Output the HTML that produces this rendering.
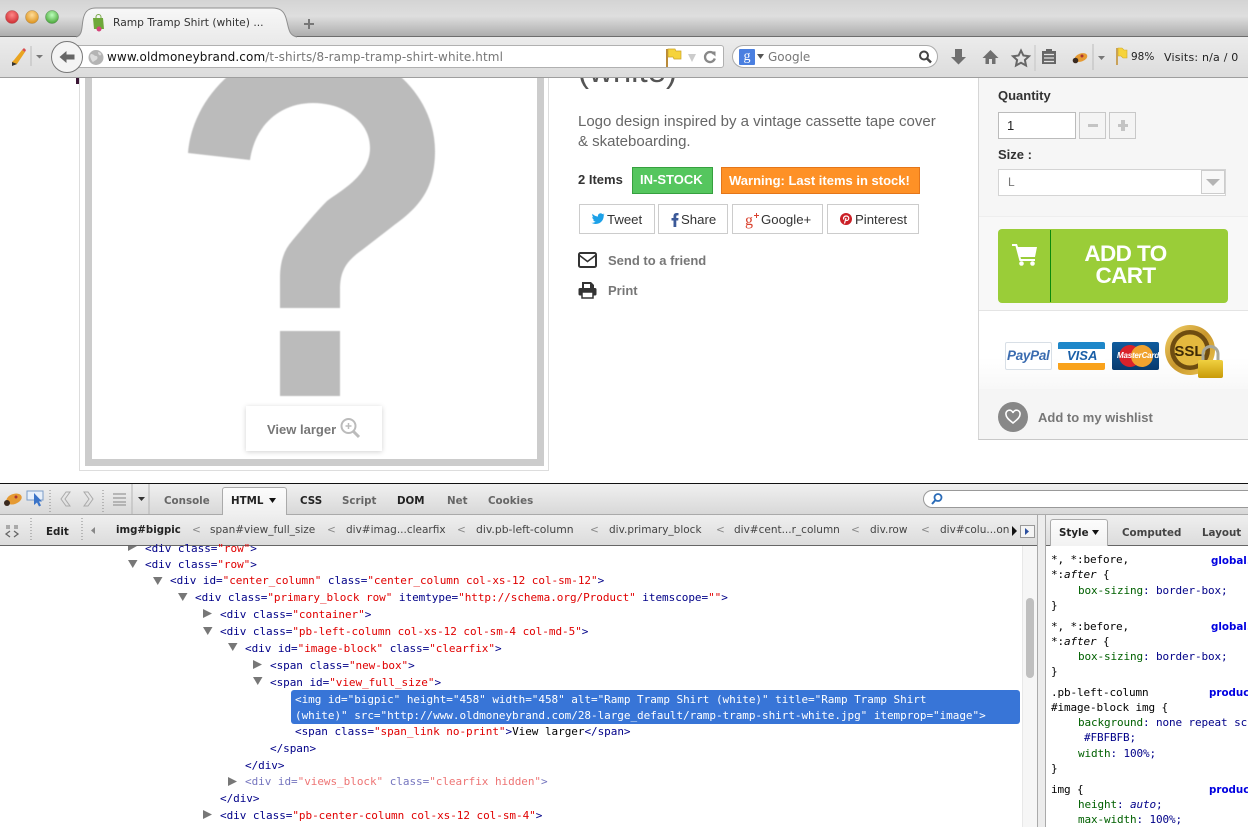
<!DOCTYPE html>
<html><head><meta charset="utf-8"><title>Ramp Tramp Shirt (white)</title>
<style>
html,body{margin:0;padding:0;width:1248px;height:827px;overflow:hidden;background:#fff}
body{position:relative;font-family:"Liberation Sans",sans-serif}
.a,.t,.m,.n{position:absolute;white-space:pre}
.a{display:block}
.l{font-family:"DejaVu Sans",sans-serif}
.b{font-weight:bold}
.m{font-family:"DejaVu Sans Mono","Liberation Mono",monospace;font-size:11px;line-height:16px;color:#000088;letter-spacing:-.045px}
.m i{font-style:normal;color:#e00000}
.m.k{color:#000}
.m.s{letter-spacing:-.12px}
.m u{text-decoration:none;color:#006000}
.m em{color:#000;font-style:italic}
.n{font-family:"DejaVu Sans",sans-serif;font-size:10.3px;font-weight:bold;line-height:14px;color:#666}
.n.d{color:#222}
.c{position:absolute;white-space:pre;font-family:"DejaVu Sans",sans-serif;font-size:10.5px;line-height:14px;color:#444}
.share{position:absolute;top:204px;height:30px;border:1px solid #ccc;box-sizing:border-box;background:#fff}
.share span{position:absolute;top:7px;font-size:13.2px;line-height:16px;color:#333;white-space:pre}
svg{position:absolute;overflow:visible}
</style></head><body>

<!-- PAGE CONTENT -->
<div class="a" style="left:76px;top:78px;width:3px;height:6px;background:#3a1535"></div>
<div class="a" style="left:79px;top:70px;width:470px;height:401px;box-sizing:border-box;border:1px solid #ddd;background:#fff"></div>
<div class="a" style="left:85px;top:70px;width:459px;height:396px;box-sizing:border-box;border:7px solid #ccc;background:#fff"></div>
<svg style="left:0;top:0;filter:blur(.5px)" width="1248" height="480"><path fill="#bbb" d="M188 153C192 100 240 45 313 45C385 45 435 95 435 151C435 190 418 208 393 226L362 250C345 262 340 272 340 290L340 308L280 308L280 278C280 262 284 250 292 241C303 228 315 213 327 201C342 190 370 175 370 148C370 122 345 103 313 103C280 103 255 125 250 160Z"/><rect x="280" y="331" width="60" height="65" fill="#bbb"/></svg>
<div class="a" style="left:246px;top:406px;width:136px;height:45px;background:#fff;box-shadow:0 1px 5px rgba(0,0,0,.18)"></div>
<div class="t b" style="left:267px;top:422px;font-size:13px;line-height:16px;color:#777">View larger</div>
<svg style="left:340px;top:418px" width="20" height="20"><circle cx="8.500" cy="8" r="7" fill="none" stroke="#bbb" stroke-width="2"/><path d="M5.500 8h6M8.500 5v6" stroke="#bbb" stroke-width="1.500"/><path d="M13 13l6 6" stroke="#bbb" stroke-width="3"/></svg>

<div class="t" style="left:578px;top:52px;font-size:33px;line-height:38px;color:#555">(white)</div>
<div class="t" style="left:578px;top:112px;font-size:15px;line-height:20px;color:#666">Logo design inspired by a vintage cassette tape cover
&amp; skateboarding.</div>
<div class="t b" style="left:578px;top:172px;font-size:13px;line-height:15px;color:#333">2 Items</div>
<div class="a" style="left:632px;top:167px;width:81px;height:27px;box-sizing:border-box;background:#55c65e;border:1px solid #36a03f"></div>
<div class="t b" style="left:640px;top:172px;font-size:13px;line-height:15px;color:#fff">IN-STOCK</div>
<div class="a" style="left:721px;top:167px;width:199px;height:27px;box-sizing:border-box;background:#fe9126;border:1px solid #e4761a"></div>
<div class="t b" style="left:729px;top:173px;font-size:13px;line-height:15px;color:#fff">Warning: Last items in stock!</div>

<div class="share" style="left:579px;width:76px"><span style="left:27px">Tweet</span>
<svg style="left:11px;top:8px" width="14" height="12" viewBox="0 0 14 12"><path fill="#1da1e8" d="M13.500 1.500c-.5.200-1 .4-1.500.4.500-.3 1-.8 1.200-1.400-.5.300-1.100.5-1.700.6A2.700 2.700 0 0 0 6.900 3c0 .2 0 .4.100.6C4.800 3.500 2.800 2.400 1.500.8 1 2 1.300 3.500 2.400 4.300c-.4 0-.8-.1-1.200-.3 0 1.300.9 2.400 2.100 2.700-.4.100-.8.100-1.200 0 .4 1.100 1.300 1.800 2.500 1.900C3.500 9.500 2 10 .5 9.800 1.700 10.600 3.100 11 4.600 11c5.400 0 8.300-4.500 8.100-8.500.3-.3.600-.6.800-1z"/></svg></div>
<div class="share" style="left:658px;width:70px"><span style="left:22px">Share</span>
<svg style="left:12px;top:7px" width="8" height="15" viewBox="0 0 8 15"><path fill="#3b5998" d="M2.500 15V8.500H.5V6h2V4.300C2.500 2 3.800 1 5.600 1H7.500v2.400H6.300c-.8 0-1 .4-1 1V6h2.200l-.3 2.500H5.300V15z"/></svg></div>
<div class="share" style="left:732px;width:91px"><span style="left:28px">Google+</span>
<svg style="left:12px;top:7px" width="14" height="15"><text x="0" y="13" font-family="Liberation Serif,serif" font-size="16" fill="#d9402c">g</text><path d="M9 3.500h5M11.500 1v5" stroke="#d9402c" stroke-width="1"/></svg></div>
<div class="share" style="left:827px;width:92px"><span style="left:27px">Pinterest</span>
<svg style="left:12px;top:8px" width="12" height="12"><circle cx="6" cy="6" r="6" fill="#cb2027"/><path d="M4.500 10.500L6 5M3.800 6.500C3 4.500 4.300 3 6.200 3c1.800 0 2.800 1.200 2.500 2.800-.3 1.500-2 2.300-3 1.200" fill="none" stroke="#fff" stroke-width="1.200"/></svg></div>

<svg style="left:578px;top:252px" width="20" height="16"><rect x="1" y="1" width="17" height="14" rx="1.500" fill="none" stroke="#333" stroke-width="2"/><path d="M1 3l8.500 6.500L18 3" fill="none" stroke="#333" stroke-width="1.600"/></svg>
<div class="t b" style="left:608px;top:253px;font-size:13px;line-height:16px;color:#777">Send to a friend</div>
<svg style="left:578px;top:281px" width="20" height="18"><path fill="#333" d="M4 1h9l3 3v4H4z"/><path fill="#fff" d="M6 3h6v4H6z"/><rect y="7" x="0.500" width="18" height="7.500" rx="1.500" fill="#333"/><rect x="4" y="11" width="11" height="6" fill="#fff" stroke="#333" stroke-width="1.500"/></svg>
<div class="t b" style="left:608px;top:283px;font-size:13px;line-height:16px;color:#777">Print</div>

<!-- RIGHT BOX -->
<div class="a" style="left:978px;top:70px;width:270px;height:370px;box-sizing:border-box;border-left:1px solid #d6d6d6;border-bottom:1px solid #c8c8c8;background:#fff"></div>
<div class="a" style="left:979px;top:70px;width:269px;height:146px;background:#f6f6f6;border-bottom:1px solid #eee"></div>
<div class="a" style="left:979px;top:217px;width:269px;height:93px;background:#f8f8f8;border-bottom:1px solid #e4e4e4"></div>
<div class="a" style="left:979px;top:311px;width:269px;height:78px;background:linear-gradient(#fff 60%,#f8f8f8)"></div>
<div class="a" style="left:979px;top:389px;width:269px;height:50px;background:#f5f5f5"></div>
<div class="t b" style="left:998px;top:88px;font-size:13px;line-height:15px;color:#333">Quantity</div>
<div class="a" style="left:998px;top:112px;width:78px;height:27px;box-sizing:border-box;border:1px solid #bbb;background:#fff"></div>
<div class="t" style="left:1007px;top:118px;font-size:13px;line-height:15px;color:#222">1</div>
<div class="a" style="left:1079px;top:112px;width:27px;height:27px;box-sizing:border-box;border:1px solid #c8c8c8;background:#f4f4f4"></div>
<div class="a" style="left:1088px;top:124px;width:10px;height:3px;background:#c4c4c4"></div>
<div class="a" style="left:1109px;top:112px;width:27px;height:27px;box-sizing:border-box;border:1px solid #c8c8c8;background:#f4f4f4"></div>
<div class="a" style="left:1118px;top:124px;width:10px;height:3px;background:#c4c4c4"></div>
<div class="a" style="left:1121px;top:120px;width:4px;height:11px;background:#c4c4c4"></div>
<div class="t b" style="left:998px;top:147px;font-size:13px;line-height:15px;color:#333">Size :</div>
<div class="a" style="left:998px;top:169px;width:228px;height:27px;box-sizing:border-box;border:1px solid #d4d4d4;background:#fff"></div>
<div class="t" style="left:1008px;top:175px;font-size:12px;line-height:14px;color:#777">L</div>
<div class="a" style="left:1201px;top:170px;width:24px;height:24px;box-sizing:border-box;border:1px solid #ccc;background:#f8f8f8"></div>
<svg style="left:1205px;top:178px" width="16" height="8"><path d="M1 1h14L8 8z" fill="#b4b4b4"/></svg>

<div class="a" style="left:998px;top:229px;width:230px;height:74px;border-radius:4px;background:#9acd38"></div>
<div class="a" style="left:1050px;top:230px;width:1px;height:72px;background:#0b8a0b"></div>
<svg style="left:1012px;top:244px" width="26" height="22" viewBox="0 0 26 22"><path fill="#fff" d="M0 0h5l1 3h19l-2 10H8.500l.5 2h14v2H7.500L3.500 2H0z"/><circle cx="9.500" cy="19.500" r="2.300" fill="#fff"/><circle cx="20.500" cy="19.500" r="2.300" fill="#fff"/></svg>
<div class="t b" style="left:1051px;top:243px;width:149px;text-align:center;font-size:22.500px;line-height:22px;color:#fff;letter-spacing:-.6px">ADD TO
CART</div>

<!-- payment logos -->
<div class="a" style="left:1005px;top:342px;width:47px;height:28px;box-sizing:border-box;background:#fff;border:1px solid #d8dfe6;border-radius:2px"></div>
<div class="t b" style="left:1007px;top:349px;font-size:13.500px;line-height:14px;font-style:italic;color:#3b6cb0;letter-spacing:-.3px">PayPal</div>
<div class="a" style="left:1058px;top:342px;width:47px;height:28px;border-radius:2px;background:linear-gradient(#1e87c9 0,#1e87c9 7px,#fff 7px,#fff 21px,#f9a21b 21px)"></div>
<div class="t b" style="left:1067px;top:349px;font-size:13px;line-height:14px;font-style:italic;color:#1a5fa8">VISA</div>
<div class="a" style="left:1112px;top:342px;width:47px;height:28px;border-radius:2px;background:linear-gradient(#0f5c9e,#083a6e)"></div>
<div class="a" style="left:1119px;top:345px;width:22px;height:22px;border-radius:50%;background:#d9222a"></div>
<div class="a" style="left:1131px;top:345px;width:22px;height:22px;border-radius:50%;background:#f0a22e"></div>
<div class="t b" style="left:1117px;top:351px;font-size:8px;line-height:10px;font-style:italic;color:#fff;letter-spacing:-.2px">MasterCard</div>
<svg style="left:1165px;top:325px" width="62" height="56"><defs><linearGradient id="gd" x1="0" y1="0" x2="1" y2="1"><stop offset="0" stop-color="#f4d36a"/><stop offset=".5" stop-color="#c8962c"/><stop offset="1" stop-color="#f0c850"/></linearGradient><linearGradient id="lk" x1="0" y1="0" x2="0" y2="1"><stop offset="0" stop-color="#f0d040"/><stop offset="1" stop-color="#c89a08"/></linearGradient></defs><circle cx="25" cy="25" r="25" fill="url(#gd)"/><circle cx="25" cy="25" r="20" fill="#6e4c10"/><circle cx="25" cy="25" r="15.500" fill="#e4b93e"/><text x="24" y="31" text-anchor="middle" font-family="Liberation Sans,sans-serif" font-weight="bold" font-size="15" fill="#3e2a06">SSL</text><path d="M38 36v-7a7.500 7.500 0 0 1 15 0v7" fill="none" stroke="#a8a89a" stroke-width="3"/><rect x="33" y="35" width="25" height="18" rx="2" fill="url(#lk)"/></svg>

<div class="a" style="left:998px;top:402px;width:30px;height:30px;border-radius:50%;background:#888"></div>
<svg style="left:1005px;top:410px" width="16" height="14" viewBox="0 0 16 14"><path d="M8 13C3 9 1 7 1 4.500A3.300 3.300 0 0 1 8 3a3.300 3.300 0 0 1 7 1.500C15 7 13 9 8 13z" fill="none" stroke="#fff" stroke-width="1.600"/></svg>
<div class="t b" style="left:1038px;top:410px;font-size:13px;line-height:15px;color:#777">Add to my wishlist</div>

<!-- BROWSER TITLE BAR -->
<div class="a" style="left:0;top:0;width:1248px;height:37px;background:linear-gradient(#d4d4d4,#dedede 45%,#adadad);border-bottom:1px solid #6d6d6d;box-sizing:border-box"></div>
<div class="a" style="left:0;top:37px;width:1248px;height:41px;box-sizing:border-box;background:linear-gradient(#ececec,#dcdcdc);border-bottom:1px solid #9e9e9e"></div>
<svg style="left:0;top:0" width="340" height="40"><defs><linearGradient id="tg" x1="0" y1="0" x2="0" y2="1"><stop offset="0" stop-color="#f7f7f7"/><stop offset="1" stop-color="#ececec"/></linearGradient><radialGradient id="r1" cx=".5" cy=".35" r=".7"><stop offset="0" stop-color="#f88"/><stop offset="1" stop-color="#c8242a"/></radialGradient><radialGradient id="r2" cx=".5" cy=".35" r=".7"><stop offset="0" stop-color="#fd9"/><stop offset="1" stop-color="#d88a10"/></radialGradient><radialGradient id="r3" cx=".5" cy=".35" r=".7"><stop offset="0" stop-color="#bfb"/><stop offset="1" stop-color="#3f9d2c"/></radialGradient></defs>
<path d="M76 37C84 35 81 24 84 16C86 10 90 8 96 8H272C280 8 284 11 286 18C289 28 288 35 297 37Z" fill="url(#tg)"/>
<path d="M76 37C84 35 81 24 84 16C86 10 90 8 96 8H272C280 8 284 11 286 18C289 28 288 35 297 37" fill="none" stroke="#8f8f8f"/>
<circle cx="12" cy="17" r="6.500" fill="url(#r1)" stroke="#a55" stroke-width=".5"/><circle cx="32" cy="17" r="6.500" fill="url(#r2)" stroke="#a85" stroke-width=".5"/><circle cx="52" cy="17" r="6.500" fill="url(#r3)" stroke="#585" stroke-width=".5"/>
<path d="M93 18h10l1 11H94z" fill="#6fa83a"/><path d="M96 18v-1a2.500 2.500 0 0 1 5 0v1" fill="none" stroke="#7aa84a"/><circle cx="99" cy="29" r="2.500" fill="#d5447a"/>
<path d="M304 23h10v2h-10zM308 19h2v10h-2z" fill="#777"/></svg>
<div class="c" style="left:113px;top:16px;font-size:10.700px;color:#333">Ramp Tramp Shirt (white) ...</div>

<!-- toolbar -->
<svg style="left:0;top:37px" width="110" height="40"><path d="M12 25l2 3 3-1 8-12-3-2-8 10z" fill="#e9a420"/><path d="M22 13l3 2 1-2-2-2z" fill="#d94f4f"/><path d="M12 25l5 2-5 2z" fill="#333"/><path d="M31 9v20" stroke="#bbb"/><path d="M36 18h7l-3.500 3.500z" fill="#777"/></svg>
<div class="a" style="left:60px;top:45px;width:664px;height:23px;box-sizing:border-box;background:#fff;border:1px solid #b0b0b0;border-radius:0 3px 3px 0"></div>
<svg style="left:50px;top:41px" width="36" height="32"><circle cx="17" cy="16" r="15.500" fill="#f4f4f4" stroke="#777"/><path d="M9.500 16l7-6v3.500h8v5h-8v3.500z" fill="#666"/></svg>
<svg style="left:88px;top:50px" width="16" height="15"><circle cx="8" cy="7.500" r="7.500" fill="#b4b4b4"/><path d="M3 4c3 0 3 2 5 2s2 3 0 4-3 3-4 1-3-5-1-7zM10 2c2 0 4 2 3 3s-3 0-3-3z" fill="#dcdcdc"/></svg>
<div class="l" style="position:absolute;left:107px;top:50px;font-size:12px;line-height:15px;white-space:pre;color:#111;letter-spacing:.1px">www.oldmoneybrand.com<span style="color:#777">/t-shirts/8-ramp-tramp-shirt-white.html</span></div>
<svg style="left:665px;top:46px" width="56" height="22"><path d="M2 3v18" stroke="#b98a3a" stroke-width="2"/><path d="M3 3h7l1 2h5v8h-7l-1-2H3z" fill="#f6d33b" stroke="#caa32a" stroke-width=".7"/><path d="M23 8h8l-4 8z" fill="#ccc"/><path d="M49 8a5 5 0 1 0 .8 4.500" fill="none" stroke="#888" stroke-width="2.300"/><path d="M45.500 5.500h5v5z" fill="#888"/></svg>
<div class="a" style="left:732px;top:45px;width:206px;height:23px;box-sizing:border-box;background:#fff;border:1px solid #aaa;border-radius:12px"></div>
<div class="a" style="left:739px;top:49px;width:16px;height:16px;background:#4a7fe0;border-radius:1px;color:#fff;font:14px/15px 'Liberation Serif',serif;text-align:center">g</div>
<svg style="left:756px;top:54px" width="9" height="6"><path d="M1 0h7L4.500 5z" fill="#555"/></svg>
<div class="l" style="position:absolute;left:768px;top:50px;font-size:12px;line-height:15px;color:#777">Google</div>
<svg style="left:918px;top:50px" width="15" height="15"><circle cx="6" cy="5.500" r="4" fill="none" stroke="#444" stroke-width="2"/><path d="M9 8.500l4 4" stroke="#444" stroke-width="2.500"/></svg>
<svg style="left:940px;top:40px" width="168" height="36" viewBox="0 0 168 36">
<path d="M15 9h7v8h4l-7.500 7.500L11 17h4z" fill="#6f6f6f"/>
<path d="M50.500 10L42.500 18h3v6h3.500v-5h3v5h3.500v-6h3z" fill="#6f6f6f"/>
<path d="M81 10.500l2.400 5 5.600.7-4.100 3.800 1.100 5.500L81 22.800 76 25.500l1.100-5.500L73 16.200l5.600-.7z" fill="none" stroke="#666" stroke-width="2"/>
<path d="M95 5v26" stroke="#c4c4c4"/>
<path d="M102 11h4V9h6v2h4v13h-14z" fill="#666"/><path d="M104 14.500h10M104 18h10M104 21.500h10" stroke="#e4e4e4" stroke-width="1.300"/>
<ellipse cx="141" cy="17.500" rx="6.500" ry="4" fill="#e59a33" transform="rotate(-20 141 17.500)"/><circle cx="135.500" cy="20.500" r="2.800" fill="#3a2a20"/><circle cx="142" cy="16" r="1.500" fill="#a33"/>
<path d="M153 4v26" stroke="#bbb"/><path d="M158 16h7l-3.500 4z" fill="#777"/></svg>
<svg style="left:1114px;top:46px" width="16" height="22"><path d="M3 2v17" stroke="#c9a25a" stroke-width="2"/><path d="M4 2h4l2 2h3v8H9l-2-2H4z" fill="#f6d33b" stroke="#d0a92a" stroke-width=".6"/></svg>
<div class="l" style="position:absolute;left:1131px;top:50px;font-size:10.500px;line-height:15px;color:#222">98%</div>
<div class="l" style="position:absolute;left:1164px;top:50px;font-size:11px;line-height:15px;white-space:pre;color:#222;letter-spacing:.2px">Visits: n/a / 0</div>

<!-- FIREBUG -->
<div class="a" style="left:0;top:483px;width:1248px;height:1px;background:#111"></div>
<div class="a" style="left:0;top:484px;width:1248px;height:31px;box-sizing:border-box;background:linear-gradient(#f0f0f0,#d8d8d8);border-bottom:1px solid #aaa"></div>
<div class="a" style="left:0;top:515px;width:1248px;height:31px;box-sizing:border-box;background:linear-gradient(#efefef,#dcdcdc);border-bottom:1px solid #666"></div>
<svg style="left:0;top:484px" width="150" height="31"><ellipse cx="14" cy="15" rx="8" ry="5" fill="#e59a33" transform="rotate(-20 14 15)"/><circle cx="7" cy="19" r="3" fill="#3a2a20"/><circle cx="16" cy="13" r="1.500" fill="#a33"/><rect x="27" y="7" width="16" height="9" fill="#e8f0fa" stroke="#7a9cc8"/><path d="M34 9l0 12 3-2.500 2 4 2-1-2-4h3z" fill="#3b74c8"/><path d="M50 6v24" stroke="#888" stroke-dasharray="1 2"/><path d="M66 8l-5 7 5 7h4l-5-7 5-7z" fill="none" stroke="#aaa"/><path d="M88 8l5 7-5 7h-4l5-7-5-7z" fill="none" stroke="#aaa"/><path d="M103 6v24" stroke="#888" stroke-dasharray="1 2"/><path d="M113 10h13M113 14h13M113 18h13M113 21h13" stroke="#999" stroke-width="1.200"/><path d="M132 0v30" stroke="#b4b4b4"/><path d="M138 13h7l-3.500 4z" fill="#333"/><path d="M149 0v30" stroke="#b4b4b4"/></svg>
<div class="n" style="left:164px;top:494px">Console</div>
<div class="a" style="left:222px;top:487px;width:65px;height:28px;box-sizing:border-box;background:linear-gradient(#fcfcfc,#efefef);border:1px solid #aaa;border-bottom:0;border-radius:3px 3px 0 0"></div>
<div class="n d" style="left:231px;top:494px">HTML</div>
<svg style="left:268px;top:498px" width="9" height="6"><path d="M1 0h7L4.500 5z" fill="#111"/></svg>
<div class="n d" style="left:300px;top:494px">CSS</div>
<div class="n" style="left:342px;top:494px">Script</div>
<div class="n d" style="left:397px;top:494px">DOM</div>
<div class="n" style="left:447px;top:494px">Net</div>
<div class="n" style="left:488px;top:494px">Cookies</div>
<div class="a" style="left:923px;top:490px;width:330px;height:18px;box-sizing:border-box;background:#fff;border:1px solid #999;border-radius:9px 0 0 9px"></div>
<svg style="left:930px;top:492px" width="14" height="14"><circle cx="8" cy="5.500" r="3.500" fill="none" stroke="#2b6cb8" stroke-width="1.800"/><path d="M5.500 8L2 12" stroke="#2b6cb8" stroke-width="2"/></svg>

<svg style="left:0;top:515px" width="110" height="30"><path d="M6 10h4v4H6zM14 10h4v4h-4z" fill="#aaa"/><path d="M10 16l-4 3 4 3M14 16l4 3-4 3" fill="none" stroke="#666" stroke-width="1.300"/><path d="M31 3v24" stroke="#888" stroke-dasharray="1 2"/><path d="M82 3v24" stroke="#888" stroke-dasharray="1 2"/><path d="M95 12v7l-4-3.500z" fill="#888"/></svg>
<div class="n d" style="left:46px;top:525px">Edit</div>
<div class="c" style="left:116px;top:524px;color:#222;font-weight:bold;font-size:10.200px">img#bigpic</div>
<div class="c" style="left:192px;top:523px;color:#888">&lt;</div>
<div class="c" style="left:210px;top:523px">span#view_full_size</div>
<div class="c" style="left:327px;top:523px;color:#888">&lt;</div>
<div class="c" style="left:346px;top:523px">div#imag...clearfix</div>
<div class="c" style="left:457px;top:523px;color:#888">&lt;</div>
<div class="c" style="left:476px;top:523px;font-size:10.800px">div.pb-left-column</div>
<div class="c" style="left:590px;top:523px;color:#888">&lt;</div>
<div class="c" style="left:609px;top:523px">div.primary_block</div>
<div class="c" style="left:716px;top:523px;color:#888">&lt;</div>
<div class="c" style="left:734px;top:523px">div#cent...r_column</div>
<div class="c" style="left:851px;top:523px;color:#888">&lt;</div>
<div class="c" style="left:870px;top:523px">div.row</div>
<div class="c" style="left:921px;top:523px;color:#888">&lt;</div>
<div class="c" style="left:940px;top:523px;width:72px;overflow:hidden">div#colu...on</div>
<svg style="left:1011px;top:525px" width="26" height="13"><path d="M1 1v10l5-5z" fill="#111"/><rect x="9.500" y=".5" width="14" height="12" fill="#f4f4f4" stroke="#999"/><path d="M14 3v7l4-3.500z" fill="#2b4f9e"/></svg>

<!-- right gutter -->
<div class="a" style="left:1022px;top:546px;width:15px;height:281px;background:#f6f6f6;border-left:1px solid #e8e8e8;box-sizing:border-box"></div>
<div class="a" style="left:1026px;top:598px;width:8px;height:80px;border-radius:4px;background:#bfbfbf"></div>
<div class="a" style="left:1037px;top:515px;width:9px;height:312px;box-sizing:border-box;background:#ececec;border-left:1px solid #aaa;border-right:1px solid #aaa"></div>
<div class="a" style="left:1050px;top:519px;width:58px;height:27px;box-sizing:border-box;background:linear-gradient(#fcfcfc,#f2f2f2);border:1px solid #aaa;border-bottom:0;border-radius:3px 3px 0 0"></div>
<div class="n d" style="left:1059px;top:526px">Style</div>
<svg style="left:1091px;top:530px" width="9" height="6"><path d="M1 0h7L4.500 5z" fill="#111"/></svg>
<div class="n" style="left:1122px;top:526px;color:#444">Computed</div>
<div class="n" style="left:1202px;top:526px;color:#444">Layout</div>

<!-- HTML TREE -->
<div class="a" style="left:291px;top:690px;width:729px;height:34px;border-radius:3px;background:#3875d7"></div>
<svg style="left:120px;top:546px" width="130" height="280" fill="#777"><path d="M8 0v5l9-5z"/><path d="M8 14h9.500l-4.750 8zM33 31h9.500l-4.750 8zM58 47h9.500l-4.750 8zM83 81h9.500l-4.750 8zM108 97h9.500l-4.750 8zM133 131h9.500l-4.750 8z"/><path d="M83 63v9l9-4.500zM133 114v9l9-4.500zM108 231v9l9-4.500zM83 264v9l9-4.500z"/></svg>
<div class="m" style="left:145px;top:541px">&lt;div class=<i>"row"</i>&gt;</div>
<div class="m" style="left:145px;top:557px">&lt;div class=<i>"row"</i>&gt;</div>
<div class="m" style="left:170px;top:573px">&lt;div id=<i>"center_column"</i> class=<i>"center_column col-xs-12 col-sm-12"</i>&gt;</div>
<div class="m" style="left:195px;top:590px">&lt;div class=<i>"primary_block row"</i> itemtype=<i>"http://schema.org/Product"</i> itemscope=<i>""</i>&gt;</div>
<div class="m" style="left:220px;top:607px">&lt;div class=<i>"container"</i>&gt;</div>
<div class="m" style="left:220px;top:624px">&lt;div class=<i>"pb-left-column col-xs-12 col-sm-4 col-md-5"</i>&gt;</div>
<div class="m" style="left:245px;top:641px">&lt;div id=<i>"image-block"</i> class=<i>"clearfix"</i>&gt;</div>
<div class="m" style="left:270px;top:658px">&lt;span class=<i>"new-box"</i>&gt;</div>
<div class="m" style="left:270px;top:675px">&lt;span id=<i>"view_full_size"</i>&gt;</div>
<div class="m" style="left:295px;top:692px;color:#fff">&lt;img id="bigpic" height="458" width="458" alt="Ramp Tramp Shirt (white)" title="Ramp Tramp Shirt
(white)" src="http://www.oldmoneybrand.com/28-large_default/ramp-tramp-shirt-white.jpg" itemprop="image"&gt;</div>
<div class="m" style="left:295px;top:724px">&lt;span class=<i>"span_link no-print"</i>&gt;<span style="color:#000">View larger</span>&lt;/span&gt;</div>
<div class="m" style="left:270px;top:741px">&lt;/span&gt;</div>
<div class="m" style="left:245px;top:758px">&lt;/div&gt;</div>
<div class="m" style="left:245px;top:774px;opacity:.55">&lt;div id=<i>"views_block"</i> class=<i>"clearfix hidden"</i>&gt;</div>
<div class="m" style="left:220px;top:791px">&lt;/div&gt;</div>
<div class="m" style="left:220px;top:808px">&lt;div class=<i>"pb-center-column col-xs-12 col-sm-4"</i>&gt;</div>

<!-- STYLE PANEL -->
<div class="m k s" style="left:1051px;top:552px">*, *:before,</div>
<div class="m k s" style="left:1051px;top:567px">*:<em>after</em> {</div>
<div class="m s" style="left:1078px;top:583px"><u>box-sizing</u>: border-box;</div>
<div class="m k s" style="left:1051px;top:598px">}</div>
<div class="m k s" style="left:1051px;top:619px">*, *:before,</div>
<div class="m k s" style="left:1051px;top:634px">*:<em>after</em> {</div>
<div class="m s" style="left:1078px;top:649px"><u>box-sizing</u>: border-box;</div>
<div class="m k s" style="left:1051px;top:664px">}</div>
<div class="m k s" style="left:1051px;top:685px">.pb-left-column</div>
<div class="m k s" style="left:1051px;top:700px">#image-block img {</div>
<div class="m s" style="left:1078px;top:715px"><u>background</u>: none repeat scroll</div>
<div class="m s" style="left:1084px;top:730px">#FBFBFB;</div>
<div class="m s" style="left:1078px;top:746px"><u>width</u>: 100%;</div>
<div class="m k s" style="left:1051px;top:761px">}</div>
<div class="m k s" style="left:1051px;top:782px">img {</div>
<div class="m s" style="left:1078px;top:797px"><u>height</u>: <em style="color:#000088">auto</em>;</div>
<div class="m s" style="left:1078px;top:812px"><u>max-width</u>: 100%;</div>
<div class="n" style="left:1211px;top:554px;color:#0000e0">global.</div>
<div class="n" style="left:1211px;top:620px;color:#0000e0">global.</div>
<div class="n" style="left:1209px;top:686px;color:#0000e0">produc</div>
<div class="n" style="left:1209px;top:783px;color:#0000e0">produc</div>
</body></html>
